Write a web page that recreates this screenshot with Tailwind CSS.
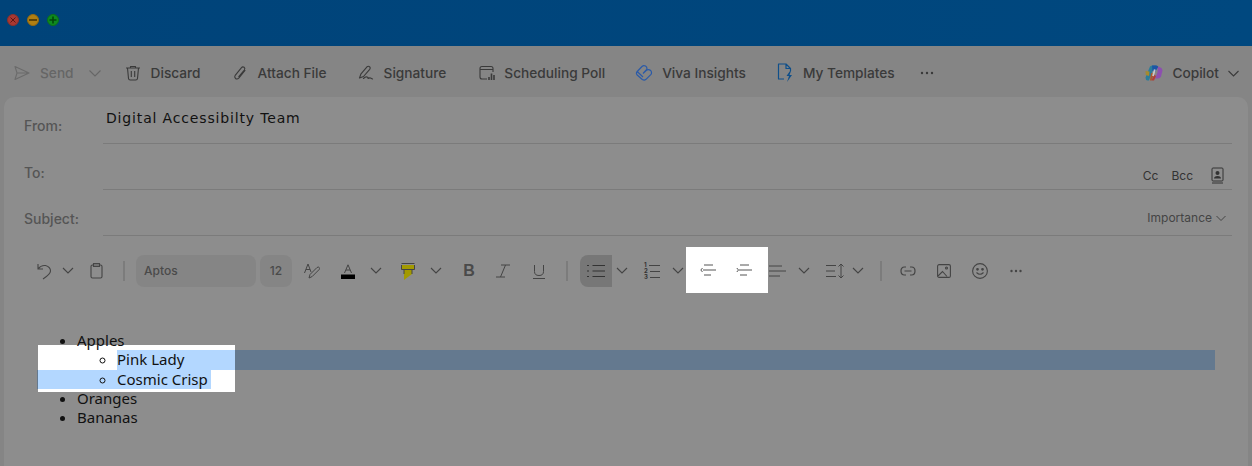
<!DOCTYPE html>
<html lang="en">
<head>
    <meta charset="UTF-8">
    <title>New Message</title>
    <script src="https://cdn.jsdelivr.net/npm/@tailwindcss/browser@4"></script>
</head>
<body class="w-[1252px] h-[466px] overflow-hidden bg-[#858585] font-['Inter',sans-serif] text-[#3a3a3a]">
    <!-- title bar -->
    <div class="h-[46px] bg-gradient-to-r from-[#004379] to-[#00487f] flex items-center pl-[7px] pb-[6px] gap-2">
        <span class="w-3 h-3 rounded-full bg-[#a83832] border border-[#8a2f2a] flex items-center justify-center">
            <svg width="8" height="8" viewBox="0 0 8 8" fill="none" stroke="#5c1713" stroke-width="1"><path d="M1.5 1.5l5 5M6.5 1.5l-5 5"/></svg>
        </span>
        <span class="w-3 h-3 rounded-full bg-[#b07f13] border border-[#94690f] flex items-center justify-center">
            <span class="w-2 h-[2px] bg-[#5e4305]"></span>
        </span>
        <span class="w-3 h-3 rounded-full bg-[#0e8a1f] border border-[#0b7019] flex items-center justify-center">
            <svg width="8" height="8" viewBox="0 0 8 8" fill="none" stroke="#03470b" stroke-width="1.6"><path d="M4 .5v7M.5 4h7"/></svg>
        </span>
    </div>

    <!-- main toolbar -->
    <div class="h-[51px] flex items-center pl-[14px] pr-[13px] pt-[3px] text-[13.7px] font-medium">
        <svg class="mr-[10px]" width="16" height="16" viewBox="0 0 16 16" fill="none" stroke="#6b6b6b" stroke-width="1.1" stroke-linejoin="round"><path d="M1 1.5l14 6.5-14 6.500 2-6.500zM3 8h12"/></svg>
        <span class="text-[#666]">Send</span>
        <svg class="ml-[15px]" width="12" height="12" viewBox="0 0 12 12" fill="none" stroke="#666" stroke-width="1.1"><path d="M.5 3.5l5.500 5.500 5.500-5.500"/></svg>
        <svg class="ml-[24px] mr-[10px]" width="16" height="16" viewBox="0 0 16 16" fill="none" stroke="#3a3a3a" stroke-width="1.1" stroke-linejoin="round"><path d="M1 3h14M5.500 3V1.500h5V3M2.500 3l1 10.500q.2 1.500 1.700 1.500h5.600q1.500 0 1.700-1.500l1-10.500M6.300 6v6M9.700 6v6"/></svg>
        <span>Discard</span>
        <svg class="ml-[32px] mr-[11px]" width="14" height="16" viewBox="0 0 14 16" fill="none" stroke="#3a3a3a" stroke-width="1.1" stroke-linecap="round"><path d="M12 5.500L6 12.800q-1.800 1.900-3.500.7-1.500-1.400-.3-3.200L8.300 2.800q1.300-1.500 2.800-.5 1.400 1.100.2 2.700L5.800 11.600"/></svg>
        <span>Attach File</span>
        <svg class="ml-[31px] mr-[10px]" width="16" height="16" viewBox="0 0 16 16" fill="none" stroke="#3a3a3a" stroke-width="1.1" stroke-linejoin="round" stroke-linecap="round"><path d="M1.500 13L3 8.800 9 1.800q1.500-1.200 2.700 0 1 1.200 0 2.500L5.500 11.500zM5.500 13.500q2-2 3.500-1.500t1 1.500q1.500-1 2.500-.5l2 1"/></svg>
        <span>Signature</span>
        <svg class="ml-[33px] mr-[9px]" width="16" height="16" viewBox="0 0 16 16" fill="none" stroke="#3a3a3a" stroke-width="1.1"><path d="M8 14H3q-2 0-2-2V3.500q0-2 2-2h9q2 0 2 2V7M1 4.500h13"/><path d="M10 15v-3M12.500 15V8.500M15 15v-5" stroke-width="1.600"/></svg>
        <span>Scheduling Poll</span>
        <svg class="ml-[30px] mr-[9px]" width="18" height="18" viewBox="0 0 18 18" fill="none" stroke="#2a5aa8" stroke-width="1.200" stroke-linejoin="round"><path d="M2.200 7.500L7 2.500q1.500-1.500 3.500-.5 2 1.300 1.200 3.500L8 9.500M8 9.500l3.500-3.300q2-1.500 4.200.3 1.500 2 .3 3.800l-5 5q-1.700 1.500-3.700.2L2.200 11q-1.500-1.800 0-3.500L8 13"/></svg>
        <span>Viva Insights</span>
        <svg class="ml-[31px] mr-[9px]" width="17" height="20" viewBox="0 0 17 20" fill="none" stroke="#0f4f8a" stroke-width="1.200" stroke-linejoin="round"><path d="M7 16H1.500V1H9l4.500 4.500V8M9 1v4.500h4.500"/><path d="M13 8l-3.500 5H12l-2 6 5-7h-2.500l1.500-4z" fill="#0f4f8a" stroke="none"/></svg>
        <span>My Templates</span>
        <svg class="ml-[25px]" width="14" height="4" viewBox="0 0 14 4" fill="#3a3a3a"><circle cx="2" cy="2" r="1.200"/><circle cx="7" cy="2" r="1.200"/><circle cx="12" cy="2" r="1.200"/></svg>
        <svg class="ml-auto mr-[9px]" width="18" height="16" viewBox="0 0 18 16">
            <path d="M5 1.500Q6 .5 8 .5h3.500L7.500 6 4 15.500H2.500Q.5 15 .5 12.500z" fill="#2a7d9a"/>
            <path d="M7 .5h4.500q1.500 0 1.800 1.500L10 7 7.500 6z" fill="#1c55a6"/>
            <path d="M13 1.500q4.500 1 4.500 4L16 11.500q-.8 2-3 2H10l2.500-6z" fill="#8d4fb0"/>
            <path d="M6 8l3 .5L6.500 15.500H5z" fill="#a85a2e"/>
            <path d="M9 9.500l2 1.500-2 4.500H6.500z" fill="#b03f3a"/>
            <path d="M.5 6l4 .5L4 11 .8 10z" fill="#a58a2f"/>
            <path d="M9.800 4.500L8 11" stroke="#c9c9c9" stroke-width="1.800"/>
        </svg>
        <span>Copilot</span>
        <svg class="ml-[9px]" width="11" height="11" viewBox="0 0 11 11" fill="none" stroke="#3a3a3a" stroke-width="1.100"><path d="M.5 3l5 5 5-5"/></svg>
    </div>

    <!-- compose card -->
    <div class="relative mx-1 h-[369px] rounded-t-[10px] bg-[#8d8d8d] text-[14px]">
        <div class="flex h-[47px] items-center pl-5">
            <span class="w-[79px] pt-[10px] text-[#555] font-medium">From:</span>
            <div class="w-[1129px] h-full border-b border-[#7b7b7b] flex items-center pl-[3px] pb-[4px] font-['DejaVu_Sans',sans-serif] text-[#111] text-[14px] tracking-[0.84px]">Digital Accessibilty Team</div>
        </div>
        <div class="flex h-[46px] items-center pl-5">
            <span class="w-[79px] pt-[10px] text-[#555] font-medium">To:</span>
            <div class="w-[1129px] h-full border-b border-[#7b7b7b] flex items-center justify-end pt-[18px] pr-2 text-[12px] text-[#333]">
                <span>Cc</span>
                <span class="ml-[13px]">Bcc</span>
                <svg class="ml-[18px]" width="13" height="17" viewBox="0 0 13 17" fill="none" stroke="#333" stroke-width="1"><rect x="1" y="1" width="11" height="13" rx="1"/><path d="M1 16h11"/><circle cx="6.500" cy="6" r="2" fill="#333" stroke="none"/><path d="M3 11.500q0-2.500 3.500-2.500t3.500 2.500z" fill="#333" stroke="none"/></svg>
            </div>
        </div>
        <div class="flex h-[46px] items-center pl-5">
            <span class="w-[79px] pt-[10px] text-[#555] font-medium">Subject:</span>
            <div class="w-[1129px] h-full border-b border-[#7b7b7b] flex items-center justify-end pt-[10px] pr-[6px] text-[12px] text-[#444]">
                <span>Importance</span>
                <svg class="ml-[4px]" width="10" height="10" viewBox="0 0 10 10" fill="none" stroke="#444" stroke-width="1"><path d="M.5 3l4.500 4.500L9.500 3"/></svg>
            </div>
        </div>

        <!-- format bar -->
        <div class="flex h-[57px] items-center pl-[33px] pt-[13px] text-[12px] font-medium text-[#4a4a4a]">
            <svg width="15" height="17" viewBox="0 0 15 17" fill="none" stroke="#444" stroke-width="1.100"><path d="M1 1v5h5M1 6q3-4 7.500-3.500 5 1.500 5 5.500 0 3-7.500 8"/></svg>
            <svg class="ml-[10px]" width="12" height="8" viewBox="0 0 12 8" fill="none" stroke="#444" stroke-width="1.100"><path d="M1 1l5 5 5-5"/></svg>
            <svg class="ml-[16px]" width="13" height="16" viewBox="0 0 13 16" fill="none" stroke="#444" stroke-width="1.100"><rect x="1" y="2" width="11" height="13" rx="1.500"/><rect x="3.500" y=".6" width="6" height="2.800" fill="#7c7c7c"/></svg>
            <span class="ml-[20px] w-[2px] h-5 bg-[#7c7c7c]"></span>
            <div class="ml-[11px] w-[120px] h-8 rounded-lg bg-[#858585] flex items-center pl-2">Aptos</div>
            <div class="ml-1 w-8 h-8 rounded-lg bg-[#858585] flex items-center justify-center">12</div>
            <svg class="ml-3" width="16" height="16" viewBox="0 0 16 16" fill="none" stroke="#444" stroke-width="1"><path d="M.5 10L4 1l3 8M2 6.500h4M5 15l1-3.500 7-7q1.500-1 2.200 0 .8 1 0 2l-7 7z"/></svg>
            <svg class="ml-[21px]" width="14" height="15" viewBox="0 0 14 15" fill="none" stroke="#444" stroke-width="1"><path d="M3.500 9L7 .8 10.500 9M5 6h4"/><rect x="0" y="10.500" width="14" height="4.500" fill="#000" stroke="none"/></svg>
            <svg class="ml-[15px]" width="12" height="8" viewBox="0 0 12 8" fill="none" stroke="#444" stroke-width="1.100"><path d="M1 1l5 5 5-5"/></svg>
            <svg class="ml-[19px]" width="14" height="17" viewBox="0 0 14 17"><path d="M0 2h14v4.500h-14z" fill="#a39a00"/><path d="M3 6h8v5l-8 6z" fill="#a39a00"/><path d="M.5 2v4.500h13V2M.5 .5h13M3 6.500V11M11 6.500V11" stroke="#444" fill="none"/></svg>
            <svg class="ml-[15px]" width="12" height="8" viewBox="0 0 12 8" fill="none" stroke="#444" stroke-width="1.100"><path d="M1 1l5 5 5-5"/></svg>
            <span class="ml-[20px] w-[14px] text-center text-[16px] font-bold font-['Liberation_Sans',sans-serif]">B</span>
            <svg class="ml-[20px]" width="14" height="14" viewBox="0 0 14 14" fill="none" stroke="#444" stroke-width="1"><path d="M5 1h9M0 13h9M9.500 1L4.500 13"/></svg>
            <svg class="ml-[23px]" width="12" height="15" viewBox="0 0 12 15" fill="none" stroke="#444" stroke-width="1"><path d="M1.500 1v6.500q0 4 4.500 4t4.500-4V1M0 14.500h12"/></svg>
            <span class="ml-[21px] w-[2px] h-5 bg-[#7c7c7c]"></span>
            <div class="ml-3 w-8 h-8 rounded-l-lg bg-[#777] flex items-center justify-center">
                <svg width="18" height="14" viewBox="0 0 18 14" fill="none" stroke="#333" stroke-width="1.100"><path d="M5.500 1.500H18M5.500 7H18M5.500 12.500H18M0 1.500h2M0 7h2M0 12.500h2" /></svg>
            </div>
            <svg class="ml-1" width="12" height="8" viewBox="0 0 12 8" fill="none" stroke="#444" stroke-width="1.100"><path d="M1 1l5 5 5-5"/></svg>
            <div class="ml-4 w-[16px] h-[18px] flex flex-col justify-between text-[6px] leading-[6px] text-[#333] font-bold">
                <span class="flex items-center gap-[2px]">1<span class="flex-1 h-px bg-[#444]"></span></span>
                <span class="flex items-center gap-[2px]">2<span class="flex-1 h-px bg-[#444]"></span></span>
                <span class="flex items-center gap-[2px]">3<span class="flex-1 h-px bg-[#444]"></span></span>
            </div>
            <svg class="ml-3" width="12" height="8" viewBox="0 0 12 8" fill="none" stroke="#444" stroke-width="1.100"><path d="M1 1l5 5 5-5"/></svg>
            <div class="ml-[2px] w-[82px] h-[46px] -mt-[2px] bg-white flex items-center pl-[14px] gap-[20px]">
                <svg width="16" height="12" viewBox="0 0 16 12" fill="none" stroke="#555" stroke-width="1"><path d="M4 1h9M3 6h13M4 11h7"/><path d="M2.500 4L.8 6l1.700 2" /></svg>
                <svg width="16" height="12" viewBox="0 0 16 12" fill="none" stroke="#555" stroke-width="1"><path d="M4 1h9M3 6h13M4 11h7"/><path d="M.8 4l1.700 2-1.700 2"/></svg>
            </div>
            <svg class="ml-[1px]" width="17" height="12" viewBox="0 0 17 12" fill="none" stroke="#444" stroke-width="1"><path d="M0 1h13M0 6h17M0 11h11"/></svg>
            <svg class="ml-3" width="12" height="8" viewBox="0 0 12 8" fill="none" stroke="#444" stroke-width="1.100"><path d="M1 1l5 5 5-5"/></svg>
            <svg class="ml-4" width="20" height="16" viewBox="0 0 20 16" fill="none" stroke="#444" stroke-width="1"><path d="M0 2.500h10M0 8h9M0 13.500h10M15 1v14M12.500 3.500L15 1l2.500 2.500M12.500 12.500L15 15l2.500-2.500"/></svg>
            <svg class="ml-[6px]" width="12" height="8" viewBox="0 0 12 8" fill="none" stroke="#444" stroke-width="1.100"><path d="M1 1l5 5 5-5"/></svg>
            <span class="ml-4 w-[2px] h-5 bg-[#7c7c7c]"></span>
            <svg class="ml-[18px]" width="16" height="10" viewBox="0 0 16 10" fill="none" stroke="#444" stroke-width="1.200"><path d="M6 1H4.500q-3.500 0-3.500 4t3.500 4H6M10 1h1.500q3.500 0 3.500 4t-3.500 4H10M4.500 5h7"/></svg>
            <svg class="ml-[21px]" width="14" height="14" viewBox="0 0 14 14" fill="none" stroke="#444" stroke-width="1.100"><rect x=".6" y=".6" width="12.800" height="12.800" rx="1.500"/><path d="M1 12l4.500-4.500L10 12.500"/><circle cx="9.500" cy="4" r="1"/></svg>
            <svg class="ml-[21px]" width="16" height="16" viewBox="0 0 16 16" fill="none" stroke="#444" stroke-width="1.100"><circle cx="8" cy="8" r="7.400"/><path d="M4.500 9.500q3.500 3.500 7 0"/><circle cx="5.500" cy="6.300" r=".8" fill="#444"/><circle cx="10.500" cy="6.300" r=".8" fill="#444"/></svg>
            <svg class="ml-[22px]" width="12" height="4" viewBox="0 0 12 4" fill="#444"><circle cx="1.500" cy="2" r="1.200"/><circle cx="6" cy="2" r="1.200"/><circle cx="10.500" cy="2" r="1.200"/></svg>
        </div>

        <!-- message body -->
        <div class="relative pt-[38px] text-[15px] leading-[19.25px] text-[#111] font-['Noto_Sans',sans-serif]">
            <!-- spotlight and selection, behind the list text -->
            <div class="absolute left-[113px] top-[57px] w-[1098px] h-[20px] bg-[#64798f]"></div>
            <div class="absolute left-[33px] top-[77px] w-[1px] h-[19px] bg-[#64798f]"></div>
            <div class="absolute left-[34px] top-[52px] w-[197px] h-[47px] bg-white"></div>
            <div class="absolute left-[113px] top-[57px] w-[118px] h-[20px] bg-[#b3d7ff]"></div>
            <div class="absolute left-[34px] top-[77px] w-[173px] h-[19px] bg-[#b3d7ff]"></div>
            <ul class="relative list-disc pl-[73px]">
                <li>Apples
                    <ul class="list-[circle] pl-[40px]">
                        <li>Pink Lady</li>
                        <li>Cosmic Crisp</li>
                    </ul>
                </li>
                <li>Oranges</li>
                <li>Bananas</li>
            </ul>
        </div>
    </div>
</body>
</html>
